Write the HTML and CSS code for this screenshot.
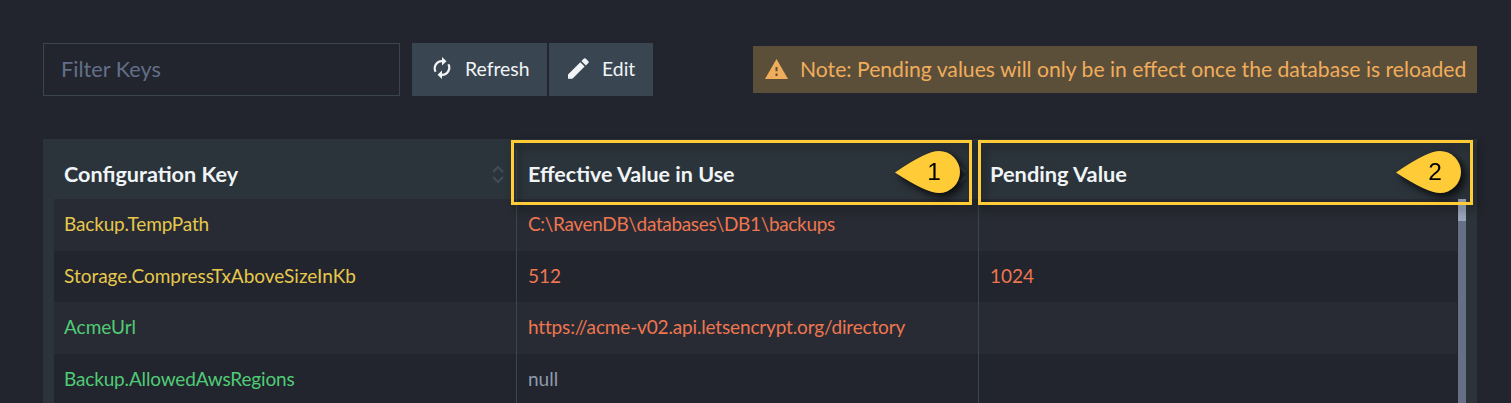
FILE: index.html
```html
<!DOCTYPE html>
<html lang="en">
<head>
<meta charset="utf-8">
<title>Database Settings</title>
<link rel="stylesheet" href="styles.css">
</head>
<body>
<div class="toolbar">
  <input class="filter" type="text" placeholder="Filter Keys">
  <div class="buttons">
    <button class="btn refresh"><svg class="icon-refresh" width="18" height="22" viewBox="0 0 18 22"><g fill="none" stroke="#f0f4f6" stroke-width="2.2"><path d="M2.6 14.8A7.2 7.2 0 0 1 9 4.2H10"/><path d="M15.4 7.2A7.2 7.2 0 0 1 9 17.800H8"/></g><path fill="#f0f4f6" d="M9 0l4.500 4.200L9 8.400zM9 13.600v8.400l-4.500-4.200z"/></svg><span>Refresh</span></button>
    <button class="btn edit"><svg class="icon-edit" width="21" height="21" viewBox="0 0 21 21"><path fill="#f0f4f6" d="M0 16.500 12.300 4.300l4.300 4.300L4.400 20.800H0zM13.400 3.100 16 .5q.8-.7 1.600 0l2.800 2.800q.7.800 0 1.600l-2.600 2.500z"/></svg><span>Edit</span></button>
  </div>
  <div class="note"><svg class="icon-warn" width="23" height="20" viewBox="0 0 23 20"><path fill="#f0ad5b" d="M11.500 0 23 20H0z"/><path fill="#5c4f3a" d="M10.500 8h2v4.200h-2zM10.500 14.500h2v2.500h-2z"/></svg><span>Note: Pending values will only be in effect once the database is reloaded</span></div>
</div>
<div class="grid">
  <div class="row head">
    <div class="cell"><span class="key">Configuration Key</span><svg class="sort" width="12" height="20" viewBox="0 0 12 20"><path d="M1 7l5-5 5 5M1 12l5 5 5-5"/></svg></div>
    <div class="cell"><span>Effective Value in Use</span><svg class="sort" width="12" height="20" viewBox="0 0 12 20"><path d="M1 7l5-5 5 5M1 12l5 5 5-5"/></svg></div>
    <div class="cell"><span class="pending">Pending Value</span></div>
  </div>
  <div class="viewport">
    <div class="rows">
      <div class="row"><div class="cell database"><span class="snug">Backup.TempPath</span></div><div class="cell value"><span class="tight">C:\RavenDB\databases\DB1\backups</span></div><div class="cell"></div></div>
      <div class="row"><div class="cell database"><span>Storage.CompressTxAboveSizeInKb</span></div><div class="cell value"><span>512</span></div><div class="cell value"><span>1024</span></div></div>
      <div class="row"><div class="cell server"><span>AcmeUrl</span></div><div class="cell value"><span class="snug">https://acme-v02.api.letsencrypt.org/directory</span></div><div class="cell"></div></div>
      <div class="row"><div class="cell server"><span class="snug">Backup.AllowedAwsRegions</span></div><div class="cell null"><span>null</span></div><div class="cell"></div></div>
    </div>
    <div class="scrollbar"><div class="thumb"></div></div>
  </div>
</div>
<div class="callout first"><svg class="pin" width="66" height="43" viewBox="0 0 66 43"><path d="M0 21.500Q31 0 44 0a21 21 0 0 1 0 42Q31 42 0 21.500z"/></svg><span class="num">1</span></div>
<div class="callout second"><svg class="pin" width="66" height="43" viewBox="0 0 66 43"><path d="M0 21.500Q31 0 44 0a21 21 0 0 1 0 42Q31 42 0 21.500z"/></svg><span class="num">2</span></div>
</body>
</html>
```
FILE: styles.css
```css
* { box-sizing: border-box; }
body {
  margin: 0;
  height: 403px;
  padding: 43px 34px 0 43px;
  overflow: hidden;
  position: relative;
  background: #22252d;
  font-family: Lato, "Liberation Sans", sans-serif;
  color: #f0f4f6;
}
svg { flex-shrink: 0; }
.toolbar { display: flex; height: 53px; align-items: center; }
.filter {
  width: 357px; height: 53px;
  padding: 0 17px 2px;
  border: 1px solid #3b444f;
  background: transparent;
  font: 21.7px Lato, sans-serif;
  color: #f0f4f6;
}
.filter::placeholder { color: #626f88; opacity: 1; }
.buttons { display: flex; gap: 2px; margin-left: 12px; }
.btn {
  display: flex; align-items: center;
  height: 53px; padding: 0 0 3px;
  border: 0; background: #3a4552; color: #f0f4f6;
  font: 19.400px Lato, sans-serif;
  white-space: nowrap;
}
.refresh { width: 135px; padding-left: 21px; gap: 14px; }
.edit { width: 104px; padding-left: 19px; gap: 13px; }
.note {
  display: flex; align-items: center;
  width: 724px; height: 47px;
  margin-left: auto; padding: 0 0 2px 12px; gap: 12px;
  background: #5c4f3a; color: #f0ad5b;
  font-size: 21.150px; white-space: nowrap;
}
.icon-warn { margin-top: 1px; }
.grid {
  height: 264px; margin-top: 43px; padding: 0 11px;
  background: #2c343b;
}
.row { display: grid; grid-template-columns: 462px 462px 1fr; height: 51.600px; }
.cell {
  display: flex; align-items: center; justify-content: space-between;
  padding: 0 12px 2px 10px; white-space: nowrap;
  font-size: 19px;
}
.cell + .cell { padding-left: 11px; border-left: 1px solid #3a4552; }
.snug { letter-spacing: -.16px; }
.tight { letter-spacing: -.34px; }
.head { height: 60px; padding-top: 10px; }
.head .cell { padding-bottom: 1px; font-size: 21.500px; font-weight: 700; }
.head .pending { font-size: 21.800px; }
.head .key { font-size: 21.600px; }
.sort { margin-top: 2px; fill: none; stroke: #434b56; stroke-width: 2; }
.viewport { display: flex; height: 204px; overflow: hidden; }
.rows { width: 1403px; background: #22252d; }
.rows .row:nth-child(odd) { background: #282b33; }
.database { color: #e6c84c; }
.server { color: #4fcb76; }
.value { color: #ee7650; }
.null { color: #8e9bad; }
.scrollbar { width: 9px; border-left: 1px solid #22252d; background: #667085; }
.thumb { height: 22px; background: #98a5b8; }
.callout {
  position: absolute; top: 140px; height: 65px;
  display: flex; align-items: center; justify-content: flex-end;
  border: 3px solid #ffcc38;
  filter: drop-shadow(4px 4px 4px rgba(0, 0, 0, .5));
}
.first { left: 511px; width: 461px; padding-right: 8px; }
.second { left: 978px; width: 495px; padding-right: 8px; }
.pin { overflow: visible; fill: #ffcc38; filter: drop-shadow(3px 3px 3px rgba(0, 0, 0, .45)); }
.num {
  position: absolute; right: 28px; top: 14px;
  font: 24.500px/30px "Liberation Sans", Arial, sans-serif; color: #000;
}
```
